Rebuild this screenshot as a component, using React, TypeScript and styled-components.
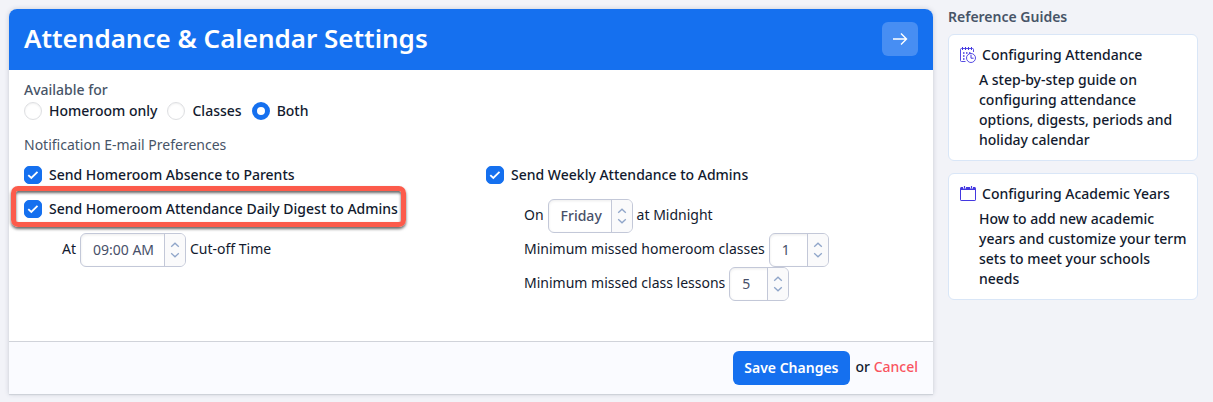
import React from 'react';
import styled, { createGlobalStyle, css } from 'styled-components';

const GlobalStyle = createGlobalStyle`
  *, *::before, *::after { box-sizing: border-box; }
  body {
    margin: 0;
    background: #f2f3f8;
    color: #121a2e;
    font-family: 'Noto Sans', 'Open Sans', sans-serif;
    font-size: 14px;
    line-height: 20px;
  }
  button, input, select { font: inherit; }
`;

const Page = styled.div`
  display: flex;
  align-items: flex-start;
  gap: 15px;
  padding: 9px 15px 8px 9px;
`;

const Card = styled.form`
  flex: 1;
  min-width: 0;
  background: #fff;
  border-radius: 8px 8px 0 0;
  box-shadow: 0 1px 1px #cdd0d8, 0 0 5px rgba(40, 50, 80, 0.2);
`;

const CardHeader = styled.header`
  display: flex;
  align-items: center;
  justify-content: space-between;
  padding: 12px 15px 14px;
  background: #1570ef;
  border-radius: 8px 8px 0 0;
`;

const Title = styled.h1`
  margin: 0;
  color: #fff;
  font-size: 26px;
  font-weight: 600;
  line-height: 35px;
`;

const NextButton = styled.button`
  display: grid;
  place-items: center;
  width: 36px;
  height: 34px;
  padding: 0;
  border: 0;
  border-radius: 6px;
  background: #478ef3;
  color: #fff;
`;

const CardBody = styled.div`
  padding: 10px 0 40px;
`;

const Group = styled.fieldset`
  min-width: 0;
  margin: 0;
  padding: 0;
  border: 0;
`;

const Legend = styled.legend<{ $medium?: boolean }>`
  padding: 0 15px;
  color: #475467;
  font-weight: ${(p) => (p.$medium ? 500 : 400)};
`;

const RadioRow = styled.div`
  display: flex;
  gap: 10px;
  padding: 1px 15px 14px;
`;

const Label = styled.label`
  display: flex;
  align-items: center;
  gap: 7px;
  font-weight: 500;
`;

const tick = css`
  appearance: none;
  flex: none;
  width: 18px;
  height: 18px;
  margin: 0;
`;

const Radio = styled.input.attrs({ type: 'radio' })`
  ${tick}
  border: 1px solid #dedfe2;
  border-radius: 50%;
  background: #fff;
  box-shadow: inset 0 1px 2px rgba(0, 0, 0, 0.06);

  &:checked {
    border: 5px solid #1570ef;
    box-shadow: none;
  }
`;

const Checkbox = styled.input.attrs({ type: 'checkbox' })`
  ${tick}
  grid-area: 1 / 1;
  border: 1px solid #c3c8d6;
  border-radius: 5px;

  &:checked {
    border-color: #1570ef;
    background: #1570ef;
  }
`;

const CheckBoxFrame = styled.span`
  display: grid;
  place-items: center;

  svg {
    grid-area: 1 / 1;
    pointer-events: none;
  }
`;

const Columns = styled.div`
  display: grid;
  grid-template-columns: 1fr 1fr;
  padding-top: 3px;
`;

const Column = styled.div`
  display: flex;
  flex-direction: column;
  align-items: flex-start;
  padding-left: 15px;
`;

const CheckLabel = styled(Label)<{ $highlight?: boolean }>`
  position: relative;
  height: 34px;

  ${(p) =>
    p.$highlight &&
    css`
      &::after {
        content: '';
        position: absolute;
        inset: -6px -8px -1px -13px;
        border: 5px solid #fc5b4b;
        border-radius: 7px;
        box-shadow: 0 2px 3px rgba(0, 0, 0, 0.6), inset 0 2px 3px rgba(0, 0, 0, 0.6);
        pointer-events: none;
      }
    `}
`;

const Details = styled.div`
  padding: 7px 0 0 38px;
`;

const DetailRow = styled.label`
  display: flex;
  align-items: center;
  gap: 4px;
  height: 34px;
`;

const DetailText = styled.span`
  padding-bottom: 2px;
`;

const SelectFrame = styled.span<{ $width: number }>`
  position: relative;
  display: flex;
  width: ${(p) => p.$width}px;
  height: 34px;
`;

const Select = styled.select<{ $medium?: boolean }>`
  appearance: none;
  width: 100%;
  padding: 0 22px 0 12px;
  border: 1px solid #c3c8d8;
  border-radius: 6px;
  background: #fff;
  box-shadow: inset 0 1px 3px rgba(0, 0, 0, 0.08);
  color: #475069;
  font-weight: ${(p) => (p.$medium ? 500 : 400)};
`;

const Arrows = styled.span`
  position: absolute;
  inset: 1px 1px 1px auto;
  display: grid;
  place-items: center;
  width: 21px;
  border-left: 1px solid #c3c8d8;
  border-radius: 0 5px 5px 0;
  background: #fafafb;
  pointer-events: none;
`;

const CardFooter = styled.footer`
  display: flex;
  align-items: center;
  justify-content: flex-end;
  padding: 9px 15px;
  border-top: 1px solid #d0d3da;
  background: #fafbff;
`;

const SaveButton = styled.button`
  height: 34px;
  margin-right: 6px;
  padding: 0 11px;
  border: 0;
  border-radius: 6px;
  background: #1570ef;
  color: #fff;
  font-weight: 600;
`;

const FooterText = styled.span`
  padding-bottom: 2px;
  font-weight: 500;
`;

const CancelLink = styled.a`
  color: #f9545f;
  text-decoration: none;
`;

const Sidebar = styled.aside`
  display: flex;
  flex: none;
  flex-direction: column;
  gap: 12px;
  width: 250px;
`;

const SidebarTitle = styled.h2`
  margin: -2px 0 -5px;
  color: #475467;
  font-size: 14px;
  font-weight: 600;
  line-height: 20px;
`;

const Guide = styled.a`
  display: block;
  padding: 10px 8px 10px 11px;
  border: 1px solid #d9e6f7;
  border-radius: 6px;
  background: #fff;
  color: inherit;
  font-weight: 500;
  text-decoration: none;
`;

const GuideTitle = styled.span`
  display: flex;
  align-items: center;
  gap: 6px;
`;

const GuideText = styled.span`
  display: block;
  padding: 5px 0 0 19px;
`;

function CheckOption({ label, highlight }: { label: string; highlight?: boolean }) {
  return (
    <CheckLabel $highlight={highlight}>
      <CheckBoxFrame>
        <Checkbox defaultChecked />
        <svg width="18" height="18" viewBox="0 0 18 18" fill="none" stroke="#fff" strokeWidth="1.8" aria-hidden="true">
          <path d="M4.3 9.1 7.3 12 13.5 5.8" />
        </svg>
      </CheckBoxFrame>
      {label}
    </CheckLabel>
  );
}

type SelectRowProps = { before: string; after?: string; options: string[]; value: string; width: number; medium?: boolean };

function SelectRow({ before, after, options, value, width, medium }: SelectRowProps) {
  return (
    <DetailRow>
      <DetailText>{before}</DetailText>
      <SelectFrame $width={width}>
        <Select defaultValue={value} $medium={medium}>
          {options.map((option) => (
            <option key={option}>{option}</option>
          ))}
        </Select>
        <Arrows>
          <svg width="10" height="16" viewBox="0 0 10 16" fill="none" stroke="#8fa5c9" strokeWidth="1.3" aria-hidden="true">
            <path d="M1.2 4.8 5 1.2 8.8 4.8M1.2 11.2 5 14.8 8.8 11.2" />
          </svg>
        </Arrows>
      </SelectFrame>
      {after && <DetailText>{after}</DetailText>}
    </DetailRow>
  );
}

const ScheduleIcon = () => (
  <svg width="16" height="16" viewBox="0 0 16 16" fill="none" stroke="#4338e0" aria-hidden="true">
    <path d="M5.5 14.5H1.5Q.5 14.5.5 13.5V2.5Q.5 1.5 1.5 1.5H12.5Q13.5 1.5 13.5 2.5V5" strokeWidth=".9" />
    <path d="M2.5 0V3M5.5 0V3M8.5 0V3M11.5 0V3" strokeWidth="1" />
    <path d="M3 6H4.5M6 6H7.5M9 6H10.5M3 9H4.5M3 12H4.5" strokeWidth="1.5" />
    <circle cx="11" cy="11" r="4.5" strokeWidth=".9" />
    <path d="M11 7.8V11.2H13.6" strokeWidth="1" />
  </svg>
);

const CalendarIcon = () => (
  <svg width="16" height="16" viewBox="0 0 16 16" fill="none" stroke="#4338e0" aria-hidden="true">
    <rect x=".5" y="1.5" width="15" height="13" rx=".6" />
    <path d="M1 2.5H15" strokeWidth="3" />
    <path d="M4.5 0V2.5M11.5 0V2.5" stroke="#fff" strokeWidth="3" />
    <path d="M4.5 0V2.5M11.5 0V2.5" strokeWidth="1.2" />
  </svg>
);

export default function App() {
  return (
    <>
      <GlobalStyle />
      <Page>
        <Card onSubmit={(event) => event.preventDefault()}>
          <CardHeader>
            <Title>Attendance &amp; Calendar Settings</Title>
            <NextButton type="button" aria-label="Next settings">
              <svg width="16" height="14" viewBox="0 0 16 14" fill="none" stroke="currentColor" strokeWidth="1.4" aria-hidden="true">
                <path d="M1 7H14.5M9 1.5 14.5 7 9 12.5" />
              </svg>
            </NextButton>
          </CardHeader>
          <CardBody>
            <Group>
              <Legend $medium>Available for</Legend>
              <RadioRow>
                <Label><Radio name="scope" />Homeroom only</Label>
                <Label><Radio name="scope" />Classes</Label>
                <Label><Radio name="scope" defaultChecked />Both</Label>
              </RadioRow>
            </Group>
            <Group>
              <Legend>Notification E-mail Preferences</Legend>
              <Columns>
                <Column>
                  <CheckOption label="Send Homeroom Absence to Parents" />
                  <CheckOption label="Send Homeroom Attendance Daily Digest to Admins" highlight />
                  <Details>
                    <SelectRow before="At" after="Cut-off Time" value="09:00 AM" width={106} options={['08:00 AM', '09:00 AM', '10:00 AM']} />
                  </Details>
                </Column>
                <Column>
                  <CheckOption label="Send Weekly Attendance to Admins" />
                  <Details>
                    <SelectRow before="On" after="at Midnight" value="Friday" width={85} medium options={['Monday', 'Tuesday', 'Wednesday', 'Thursday', 'Friday']} />
                    <SelectRow before="Minimum missed homeroom classes" value="1" width={60} options={['1', '2', '3', '4', '5']} />
                    <SelectRow before="Minimum missed class lessons" value="5" width={60} options={['1', '2', '3', '4', '5']} />
                  </Details>
                </Column>
              </Columns>
            </Group>
          </CardBody>
          <CardFooter>
            <SaveButton type="submit">Save Changes</SaveButton>
            <FooterText>or <CancelLink href="#">Cancel</CancelLink></FooterText>
          </CardFooter>
        </Card>
        <Sidebar>
          <SidebarTitle>Reference Guides</SidebarTitle>
          <Guide href="#">
            <GuideTitle><ScheduleIcon />Configuring Attendance</GuideTitle>
            <GuideText>A step-by-step guide on configuring attendance options, digests, periods and holiday calendar</GuideText>
          </Guide>
          <Guide href="#">
            <GuideTitle><CalendarIcon />Configuring Academic Years</GuideTitle>
            <GuideText>How to add new academic years and customize your term sets to meet your schools needs</GuideText>
          </Guide>
        </Sidebar>
      </Page>
    </>
  );
}
